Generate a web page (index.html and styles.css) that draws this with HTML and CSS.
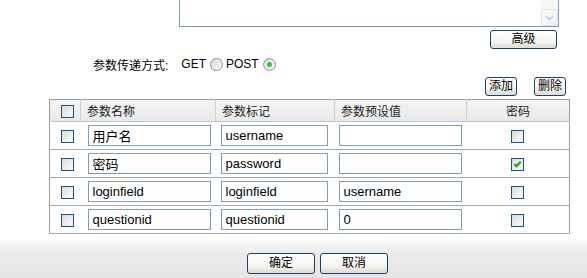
FILE: index.html
```html
<!DOCTYPE html>
<html lang="zh-CN">
<head>
  <meta charset="UTF-8" />
  <title>参数设置</title>
  <link rel="stylesheet" href="styles.css">
</head>
<body>
  <div class="page">
    <div class="memo">
      <div class="memo-text"></div>
      <div class="memo-scroll">
        <div class="scroll-btn">
          <svg width="9" height="6" viewBox="0 0 9 6"><path d="M1 1 L4.5 4.5 L8 1" fill="none" stroke="#c3c9d9" stroke-width="1.6"/></svg>
        </div>
      </div>
    </div>

    <div class="adv-row">
      <button class="xp-btn adv-btn">高级</button>
    </div>

    <div class="method-row">
      <span class="method-label">参数传递方式:</span>
      <span class="opt">GET</span>
      <span class="radio"></span>
      <span class="opt">POST</span>
      <span class="radio checked"><span class="dot"></span></span>
    </div>

    <div class="action-row">
      <button class="xp-btn small-btn">添加</button>
      <button class="xp-btn small-btn">删除</button>
    </div>

    <table class="params">
      <thead>
        <tr>
          <th class="col-check"><span class="cb"></span></th>
          <th class="col-name">参数名称</th>
          <th class="col-tag">参数标记</th>
          <th class="col-def">参数预设值</th>
          <th class="col-pwd">密码</th>
        </tr>
      </thead>
      <tbody>
        <tr>
          <td class="col-check"><span class="cb"></span></td>
          <td><input class="field name-field" type="text" value="用户名"></td>
          <td><input class="field tag-field" type="text" value="username"></td>
          <td><input class="field def-field" type="text" value=""></td>
          <td class="col-pwd"><span class="cb"></span></td>
        </tr>
        <tr>
          <td class="col-check"><span class="cb"></span></td>
          <td><input class="field name-field" type="text" value="密码"></td>
          <td><input class="field tag-field" type="text" value="password"></td>
          <td><input class="field def-field" type="text" value=""></td>
          <td class="col-pwd">
            <span class="cb">
              <svg width="11" height="11" viewBox="0 0 11 11"><path d="M2.5 5 L4.5 7.2 L8.7 2.8" fill="none" stroke="#21a121" stroke-width="2"/></svg>
            </span>
          </td>
        </tr>
        <tr>
          <td class="col-check"><span class="cb"></span></td>
          <td><input class="field name-field" type="text" value="loginfield"></td>
          <td><input class="field tag-field" type="text" value="loginfield"></td>
          <td><input class="field def-field" type="text" value="username"></td>
          <td class="col-pwd"><span class="cb"></span></td>
        </tr>
        <tr>
          <td class="col-check"><span class="cb"></span></td>
          <td><input class="field name-field" type="text" value="questionid"></td>
          <td><input class="field tag-field" type="text" value="questionid"></td>
          <td><input class="field def-field" type="text" value="0"></td>
          <td class="col-pwd"><span class="cb"></span></td>
        </tr>
      </tbody>
    </table>
  </div>

  <div class="footer">
    <button class="xp-btn foot-btn">确定</button>
    <button class="xp-btn foot-btn">取消</button>
  </div>
</body>
</html>
```

FILE: styles.css
```css
* {
  margin: 0;
  padding: 0;
  box-sizing: border-box;
}

body {
  background: #fff;
  font-family: "Liberation Sans", "Noto Sans CJK SC", sans-serif;
  font-size: 12px;
  color: #000;
  width: 587px;
  height: 278px;
  overflow: hidden;
}

.page {
  height: 240px;
}

/* textarea (top is scrolled out of view) */
.memo {
  display: flex;
  margin-left: 179px;
  width: 380px;
  height: 27px;
  border: 1px solid #7f9db9;
  border-top: none;
}

.memo-text {
  flex: 1;
}

.memo-scroll {
  width: 17px;
  background: #f7f7f4;
  display: flex;
  align-items: flex-end;
}

.scroll-btn {
  width: 17px;
  height: 17px;
  border: 1px solid #e2e4ea;
  border-radius: 2px;
  background: linear-gradient(135deg, #fbfbfb, #eef0f4);
  display: flex;
  justify-content: center;
  align-items: center;
}

/* xp style buttons */
.xp-btn {
  font-family: "Liberation Sans", "Noto Sans CJK SC", sans-serif;
  font-size: 12px;
  color: #000;
  border: 1px solid #1f3e66;
  border-radius: 3px;
  background: linear-gradient(#ffffff, #f2f2ee 70%, #d8d8d0);
  box-shadow: inset 0 -1px 0 #e3e3db;
  line-height: 17px;
  cursor: pointer;
}

.adv-row {
  display: flex;
  justify-content: flex-end;
  padding-right: 30px;
  margin-top: 3px;
}

.adv-btn {
  width: 67px;
  height: 19px;
}

.method-row {
  display: flex;
  align-items: center;
  padding-left: 93px;
  margin-top: 8px;
  height: 14px;
}

.method-label {
  margin-right: 13px;
}

.opt {
  font-size: 12px;
}

.radio {
  display: inline-flex;
  justify-content: center;
  align-items: center;
  width: 13px;
  height: 13px;
  margin: 0 3px 0 4px;
  border: 1px solid #7a93b4;
  border-radius: 50%;
  background: linear-gradient(135deg, #d8d8d2, #fbfbfb);
}

.radio .dot {
  width: 5px;
  height: 5px;
  border-radius: 50%;
  background: #3fbd3f;
}

.action-row {
  display: flex;
  justify-content: flex-end;
  gap: 17px;
  padding-right: 21px;
  margin-top: 6px;
}

.small-btn {
  width: 32px;
  height: 19px;
  padding: 0;
}

/* parameter table */
.params {
  margin-left: 49px;
  margin-top: 3px;
  width: 520px;
  table-layout: fixed;
  border-collapse: collapse;
  border: 1px solid #9c9c9c;
}

.params th {
  height: 22px;
  font-weight: normal;
  color: #222;
  text-align: left;
  padding-left: 6px;
  background: linear-gradient(#f4f4f4, #e9e9e9);
  border-right: 1px solid #d0d0d0;
  border-bottom: 1px solid #c4c4c4;
}

.params td {
  height: 28px;
  padding-left: 6px;
  border-bottom: 1px solid #a8a8a8;
}

.params .col-check {
  width: 31px;
  padding-left: 11px;
  text-align: left;
}

.params .col-name {
  width: 135px;
}

.params .col-tag {
  width: 119px;
}

.params .col-def {
  width: 132px;
}

.params .col-pwd {
  width: 103px;
  text-align: center;
  padding-left: 0;
}

.params th.col-pwd {
  border-right: none;
}

.cb {
  display: inline-flex;
  justify-content: center;
  align-items: center;
  width: 13px;
  height: 13px;
  border: 1px solid #1c5180;
  background: linear-gradient(135deg, #dcdcd7, #fbfbfb);
  vertical-align: middle;
}

.field {
  height: 21px;
  border: 1px solid #7f9db9;
  padding: 0 4px;
  font-family: "Liberation Sans", "Noto Sans CJK SC", sans-serif;
  font-size: 13px;
  color: #000;
  background: #fff;
  display: block;
}

.name-field {
  width: 123px;
  margin-left: 1px;
}

.tag-field {
  width: 107px;
  margin-left: -1px;
}

.def-field {
  width: 123px;
  margin-left: -2px;
}

/* bottom bar */
.footer {
  height: 38px;
  background: linear-gradient(#fafafa, #ededed 30%, #e4e4e4);
  display: flex;
  align-items: flex-start;
  padding-left: 247px;
  padding-top: 13px;
  gap: 5px;
}

.foot-btn {
  width: 68px;
  height: 21px;
}
```
